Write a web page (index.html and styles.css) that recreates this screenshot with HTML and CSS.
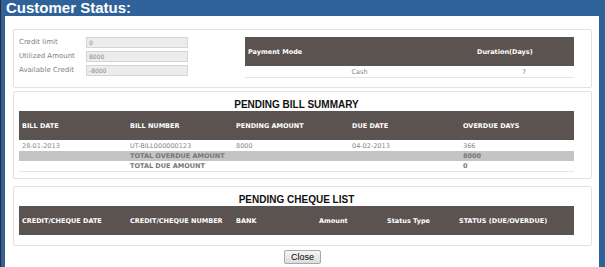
FILE: index.html
```html
<!DOCTYPE html>
<html lang="en">
<head>
  <meta charset="UTF-8">
  <title>Customer Status</title>
  <link rel="stylesheet" href="styles.css">
</head>
<body>
  <div class="dialog">
    <div class="titlebar">Customer Status:</div>
    <div class="content">

      <div class="panel panel-credit">
        <div class="credit-form">
          <label>Credit limit</label>
          <input type="text" value="0" disabled>
          <label>Utilized Amount</label>
          <input type="text" value="8000" disabled>
          <label>Available Credit</label>
          <input type="text" value="-8000" disabled>
        </div>
        <table class="grid pay-grid">
          <thead>
            <tr><th class="c-mode">Payment Mode</th><th>Duration(Days)</th></tr>
          </thead>
          <tbody>
            <tr><td>Cash</td><td>7</td></tr>
          </tbody>
        </table>
      </div>

      <div class="panel">
        <h3 class="panel-title">PENDING BILL SUMMARY</h3>
        <table class="grid bill-grid">
          <thead>
            <tr>
              <th class="b1">BILL DATE</th>
              <th class="b2">BILL NUMBER</th>
              <th class="b3">PENDING AMOUNT</th>
              <th class="b4">DUE DATE</th>
              <th>OVERDUE DAYS</th>
            </tr>
          </thead>
          <tbody>
            <tr>
              <td>28-01-2013</td>
              <td>UT-BILL000000123</td>
              <td>8000</td>
              <td>04-02-2013</td>
              <td>366</td>
            </tr>
            <tr class="total-row shaded">
              <td></td>
              <td colspan="3">TOTAL OVERDUE AMOUNT</td>
              <td>8000</td>
            </tr>
            <tr class="total-row">
              <td></td>
              <td colspan="3">TOTAL DUE AMOUNT</td>
              <td>0</td>
            </tr>
          </tbody>
        </table>
      </div>

      <div class="panel panel-cheque">
        <h3 class="panel-title">PENDING CHEQUE LIST</h3>
        <table class="grid cheque-grid">
          <thead>
            <tr>
              <th class="q1">CREDIT/CHEQUE DATE</th>
              <th class="q2">CREDIT/CHEQUE NUMBER</th>
              <th class="q3">BANK</th>
              <th class="q4">Amount</th>
              <th class="q5">Status Type</th>
              <th>STATUS (DUE/OVERDUE)</th>
            </tr>
          </thead>
        </table>
      </div>

      <div class="actions">
        <button type="button">Close</button>
      </div>
    </div>
  </div>
</body>
</html>
```

FILE: styles.css
```css
body {
  margin: 0;
  background: #2b2b2b;
  font-family: "DejaVu Sans", Verdana, sans-serif;
  color: #777;
}

.dialog {
  margin-left: 1px;
  height: 267px;
  background: #fff;
  border-left: 4px solid #2f6298;
  border-right: 6px solid #2f6298;
  box-sizing: border-box;
  overflow: hidden;
}

.titlebar {
  height: 16px;
  line-height: 16px;
  padding-left: 1px;
  background: #2f6298;
  color: #fff;
  font-family: "Liberation Sans", Arial, sans-serif;
  font-weight: bold;
  font-size: 15px;
}

.content {
  padding: 13px 7px 0 8px;
}

.panel {
  border: 1px solid #e2e2e2;
  border-radius: 2px;
  padding: 0 17px 0 5px;
  margin-bottom: 3px;
}

.panel-credit {
  display: flex;
  justify-content: space-between;
  align-items: flex-start;
  padding-top: 7px;
  box-sizing: border-box;
  height: 59px;
}

.credit-form {
  display: grid;
  grid-template-columns: 67px 102px;
  grid-auto-rows: 11px;
  row-gap: 3px;
}

.credit-form label {
  font-size: 7px;
  line-height: 11px;
  color: #808080;
}

.credit-form input {
  margin: 0;
  padding: 0 2px;
  height: 11px;
  box-sizing: border-box;
  border: 1px solid #d4d4d4;
  background: #ececec;
  font-family: inherit;
  font-size: 6px;
  color: #888;
}

.grid {
  border-collapse: collapse;
}

.grid th {
  height: 29px;
  padding: 0 3px;
  background: #5b5350;
  color: #fff;
  font-size: 6.5px;
  font-weight: bold;
  text-align: left;
  box-sizing: border-box;
}

.grid td {
  height: 11px;
  padding: 0 3px;
  font-size: 6.5px;
  line-height: 8px;
  color: #888;
}

.pay-grid {
  width: 329px;
  border-bottom: 1px solid #e4e4e4;
}

.pay-grid .c-mode {
  width: 229px;
}

.pay-grid td {
  text-align: center;
}

.panel-title {
  margin: 0;
  height: 19px;
  line-height: 26px;
  text-align: center;
  font-family: "Liberation Sans", Arial, sans-serif;
  font-size: 10px;
  color: #111;
}

.bill-grid,
.cheque-grid {
  width: 555px;
}

.bill-grid {
  margin-bottom: 6px;
  border-bottom: 1px solid #e4e4e4;
}

.bill-grid .b1 { width: 108px; }
.bill-grid .b2 { width: 106px; }
.bill-grid .b3 { width: 116px; }
.bill-grid .b4 { width: 111px; }

.total-row td {
  height: 10px;
  font-weight: bold;
  color: #777;
}

.shaded td {
  background: #c3c5c3;
}

.panel-cheque {
  margin-top: 7px;
  padding-bottom: 10px;
}

.cheque-grid .q1 { width: 108px; }
.cheque-grid .q2 { width: 106px; }
.cheque-grid .q3 { width: 83px; }
.cheque-grid .q4 { width: 68px; }
.cheque-grid .q5 { width: 72px; }

.actions {
  display: flex;
  justify-content: center;
  padding-top: 1px;
}

.actions button {
  width: 37px;
  height: 14px;
  padding: 0;
  font-family: "Liberation Sans", Arial, sans-serif;
  font-size: 9px;
  color: #000;
  border: 1px solid #a8a8a8;
  border-radius: 2px;
  background: linear-gradient(#f6f6f6, #dcdcdc);
}
```
